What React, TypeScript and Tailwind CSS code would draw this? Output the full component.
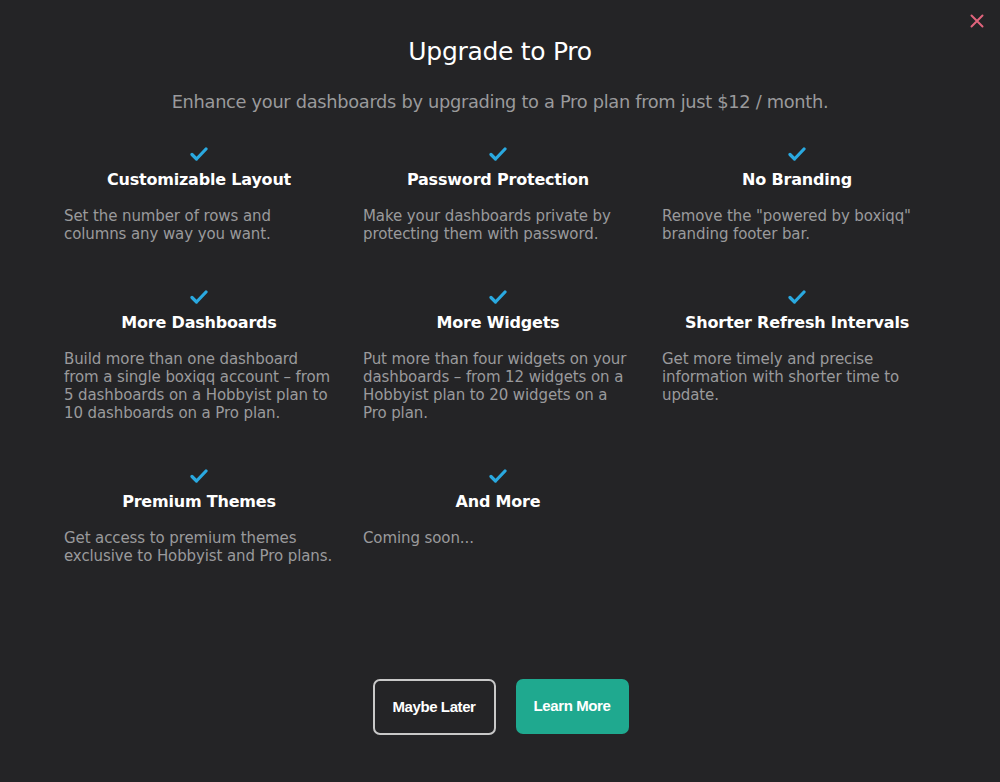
import React from 'react';

const features = [
  {
    title: 'Customizable Layout',
    lines: ['Set the number of rows and', 'columns any way you want.'],
  },
  {
    title: 'Password Protection',
    lines: ['Make your dashboards private by', 'protecting them with password.'],
  },
  {
    title: 'No Branding',
    lines: ['Remove the "powered by boxiqq"', 'branding footer bar.'],
  },
  {
    title: 'More Dashboards',
    lines: [
      'Build more than one dashboard',
      'from a single boxiqq account – from',
      '5 dashboards on a Hobbyist plan to',
      '10 dashboards on a Pro plan.',
    ],
  },
  {
    title: 'More Widgets',
    lines: [
      'Put more than four widgets on your',
      'dashboards – from 12 widgets on a',
      'Hobbyist plan to 20 widgets on a',
      'Pro plan.',
    ],
  },
  {
    title: 'Shorter Refresh Intervals',
    lines: ['Get more timely and precise', 'information with shorter time to', 'update.'],
  },
  {
    title: 'Premium Themes',
    lines: ['Get access to premium themes', 'exclusive to Hobbyist and Pro plans.'],
  },
  {
    title: 'And More',
    lines: ['Coming soon...'],
  },
];

function Check() {
  return (
    <svg width="18" height="14" viewBox="0 0 18 14" fill="none">
      <path d="M2 7.5 L6.5 12 L16 2" stroke="#2aa9e0" strokeWidth="3.2" strokeLinecap="round" strokeLinejoin="round" />
    </svg>
  );
}

export default function App() {
  return (
    <div
      className="relative w-[1000px] h-[782px] bg-[#242426] overflow-hidden"
      style={{ fontFamily: '"DejaVu Sans", "Open Sans", sans-serif' }}
    >
      {/* close */}
      <button className="absolute right-[14px] top-[12px] w-[18px] h-[18px] flex items-center justify-center">
        <svg width="14" height="14" viewBox="0 0 14 14">
          <path d="M1.5 1.5 L12.5 12.5 M12.5 1.5 L1.5 12.5" stroke="#e0647c" strokeWidth="2" strokeLinecap="round" />
        </svg>
      </button>

      <div className="flex flex-col items-center pt-[36px]">
        <h1 className="text-[25px] leading-[32px] font-medium text-white tracking-[-0.3px]">Upgrade to Pro</h1>
        <p className="mt-[24px] text-[17.8px] leading-[20px] text-[#9a9a9c] tracking-[-0.3px]">
          Enhance your dashboards by upgrading to a Pro plan from just $12 / month.
        </p>

        <div className="mt-[35px] grid grid-cols-[270px_270px_270px] gap-x-[29px] gap-y-[47px] pr-[4px]">
          {features.map((f) => (
            <div key={f.title} className="flex flex-col">
              <div className="flex justify-center">
                <Check />
              </div>
              <h3 className="mt-[7px] text-center text-[16px] leading-[24px] font-semibold text-white tracking-[-0.2px]">
                {f.title}
              </h3>
              <p className="mt-[16px] text-[15px] leading-[17.7px] text-[#9a9a9c] whitespace-nowrap tracking-[-0.1px]">
                {f.lines.map((l, i) => (
                  <span key={i} className="block">
                    {l}
                  </span>
                ))}
              </p>
            </div>
          ))}
        </div>
      </div>

      <div className="absolute left-0 right-0 top-[679px] flex justify-center gap-[20px] pl-[1px]">
        <button
          className="w-[123px] h-[56px] rounded-[7px] border-2 border-[#c8c8c8] text-white text-[15px] font-semibold tracking-[-0.4px]"
          style={{ fontFamily: '"Liberation Sans", Arial, sans-serif' }}
        >
          Maybe Later
        </button>
        <button
          className="w-[113px] h-[55px] rounded-[7px] bg-[#1fa98f] text-white text-[15px] font-semibold tracking-[-0.4px]"
          style={{ fontFamily: '"Liberation Sans", Arial, sans-serif' }}
        >
          Learn More
        </button>
      </div>
    </div>
  );
}
